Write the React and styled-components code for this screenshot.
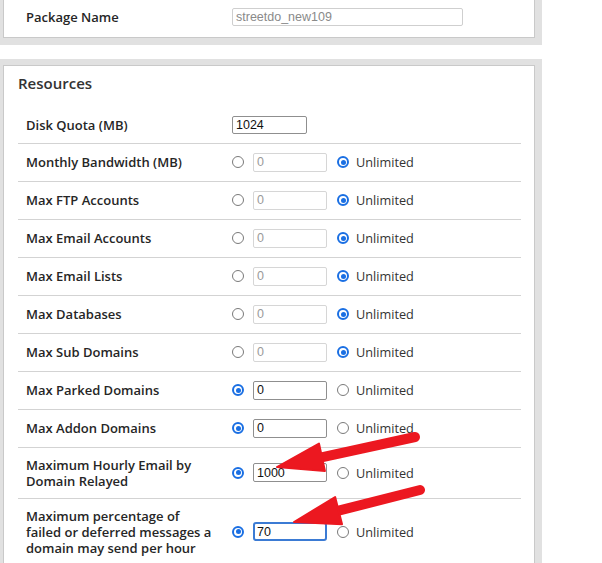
import React from "react";
import styled, { createGlobalStyle, css } from "styled-components";

const GlobalStyle = createGlobalStyle`
  html, body { margin: 0; padding: 0; background: #ffffff; }
  body { font-family: "Open Sans", "Noto Sans", sans-serif; color: #333; overflow: hidden; }
  * { box-sizing: border-box; }
`;

const Root = styled.div`
  position: relative;
  width: 602px;
  height: 563px;
  overflow: hidden;
`;

const Page = styled.div`
  width: 546px;
  margin: -8px 0 0 -4px;
  display: flex;
  flex-direction: column;
  gap: 14px;
`;

const Panel = styled.section`
  background: #e1e1e1;
  padding: 6px 7px 7px 7px;
`;

const Box = styled.div`
  background: #fff;
  border: 1px solid #c9c9c9;
  padding: ${(p) => (p.$heading ? "6px 13px 0 14px" : "0 13px 2px 14px")};
`;

const Heading = styled.h2`
  margin: 0 0 12.5px;
  font-size: 15px;
  line-height: 22px;
  font-weight: 600;
  color: #333;
`;

const Row = styled.div`
  display: grid;
  grid-template-columns: 206px 1fr;
  align-items: center;
  border-bottom: ${(p) => (p.$last ? "none" : "1px solid #d3d3d3")};
`;

const Label = styled.div`
  padding: 9px 8px;
  font-size: 13px;
  line-height: 16px;
  font-weight: 600;
  color: #262626;
`;

const Controls = styled.div`
  padding: 9px 8px;
  display: flex;
  align-items: center;
`;

const TextInput = styled.div`
  height: ${(p) => (p.$tall ? "19px" : "18px")};
  width: ${(p) => p.$w || 74}px;
  border: 1px solid ${(p) => (p.$disabled ? "#d6d6d6" : p.$soft ? "#cfcfcf" : "#8f8f8f")};
  border-radius: 2px;
  padding: 0 3px;
  display: flex;
  align-items: center;
  font-family: "Liberation Sans", Arial, sans-serif;
  font-size: 12.5px;
  color: ${(p) => (p.$disabled ? "#9a9a9a" : p.$soft ? "#8a8a8a" : "#111")};
  ${(p) =>
    p.$focused &&
    css`
      border: 2px solid #3b7bd4;
      border-radius: 3px;
      padding: 0 2px;
    `}
`;

const Radio = styled.span`
  flex: none;
  width: 12px;
  height: 12px;
  border-radius: 50%;
  border: ${(p) => (p.$checked ? "2px solid #1a6fe3" : "1px solid #7a7a7a")};
  display: flex;
  align-items: center;
  justify-content: center;
  margin-right: ${(p) => p.$gap || 0}px;
  &::after {
    content: "";
    display: ${(p) => (p.$checked ? "block" : "none")};
    width: 5px;
    height: 5px;
    border-radius: 50%;
    background: #1a6fe3;
  }
`;

const Spacer = styled.span`
  width: ${(p) => p.$w}px;
  flex: none;
`;

const OptionText = styled.span`
  font-size: 12.7px;
  line-height: 16px;
  color: #333;
`;

const Annotations = styled.svg`
  position: absolute;
  top: 0;
  left: 0;
  pointer-events: none;
`;

const rows = [
  { label: "Disk Quota (MB)", plain: "1024" },
  { label: "Monthly Bandwidth (MB)", unlimited: true },
  { label: "Max FTP Accounts", unlimited: true },
  { label: "Max Email Accounts", unlimited: true },
  { label: "Max Email Lists", unlimited: true },
  { label: "Max Databases", unlimited: true },
  { label: "Max Sub Domains", unlimited: true },
  { label: "Max Parked Domains", value: "0" },
  { label: "Max Addon Domains", value: "0" },
  { label: "Maximum Hourly Email by Domain Relayed", value: "1000" },
  {
    label: "Maximum percentage of failed or deferred messages a domain may send per hour",
    value: "70",
    focused: true,
  },
];

function Arrow({ tail, tip }) {
  const dx = tip[0] - tail[0];
  const dy = tip[1] - tail[1];
  const len = Math.hypot(dx, dy);
  const ux = dx / len;
  const uy = dy / len;
  const nx = -uy;
  const ny = ux;
  const headLen = 46;
  const half = 14;
  const bx = tip[0] - ux * headLen;
  const by = tip[1] - uy * headLen;
  const w1 = [bx + nx * half, by + ny * half];
  const w2 = [bx - nx * half, by - ny * half];
  return (
    <g fill="#ec1820" stroke="#ec1820">
      <line
        x1={tail[0]}
        y1={tail[1]}
        x2={bx + ux * 4}
        y2={by + uy * 4}
        strokeWidth="10"
        strokeLinecap="round"
      />
      <polygon
        points={`${tip[0]},${tip[1]} ${w1[0]},${w1[1]} ${w2[0]},${w2[1]}`}
        strokeWidth="2"
        strokeLinejoin="round"
      />
    </g>
  );
}

function ResourceRow({ row, last }) {
  let controls;
  if (row.plain) {
    controls = <TextInput $w={75}>{row.plain}</TextInput>;
  } else if (row.unlimited) {
    controls = (
      <>
        <Radio $gap={9} />
        <TextInput $tall $disabled>0</TextInput>
        <Spacer $w={10} />
        <Radio $checked $gap={7} />
        <OptionText>Unlimited</OptionText>
      </>
    );
  } else {
    controls = (
      <>
        <Radio $checked $gap={9} />
        <TextInput $tall $focused={row.focused}>
          {row.value}
        </TextInput>
        <Spacer $w={10} />
        <Radio $gap={7} />
        <OptionText>Unlimited</OptionText>
      </>
    );
  }
  return (
    <Row $last={last}>
      <Label>{row.label}</Label>
      <Controls>{controls}</Controls>
    </Row>
  );
}

export default function App() {
  return (
    <Root>
      <GlobalStyle />
      <Page>
        <Panel>
          <Box>
            <Row $last>
              <Label>Package Name</Label>
              <Controls>
                <TextInput $w={231} $soft>
                  streetdo_new109
                </TextInput>
              </Controls>
            </Row>
          </Box>
        </Panel>
        <Panel>
          <Box $heading>
            <Heading>Resources</Heading>
            {rows.map((r, i) => (
              <ResourceRow key={r.label} row={r} last={i === rows.length - 1} />
            ))}
          </Box>
        </Panel>
      </Page>
      <Annotations width="602" height="563" viewBox="0 0 602 563">
        <Arrow tail={[415, 437]} tip={[277, 467]} />
        <Arrow tail={[420, 490]} tip={[294, 522]} />
      </Annotations>
    </Root>
  );
}
